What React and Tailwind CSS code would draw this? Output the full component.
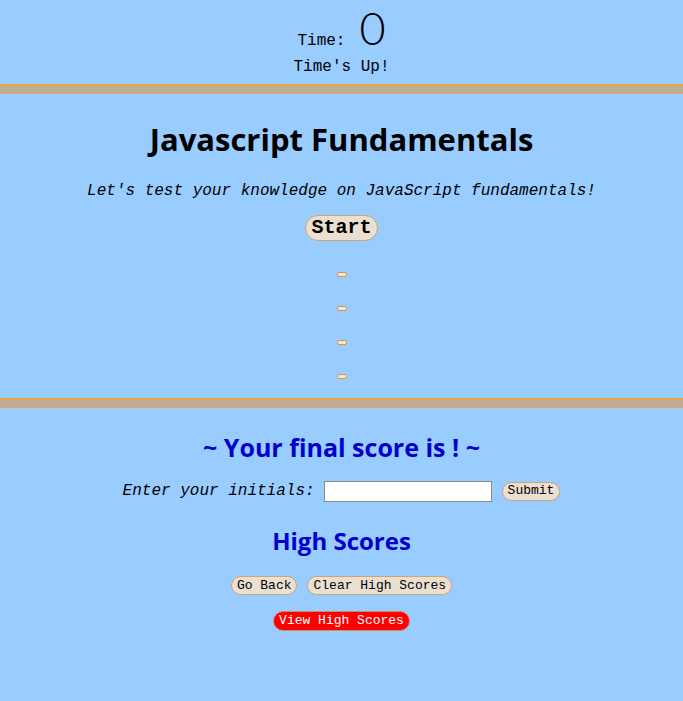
import React, { useState } from "react";

const mono = "font-['Liberation_Mono','Courier_New',monospace]";
const comic = "font-['Comic_Sans_MS','Open_Sans',sans-serif]";

function Bar() {
   return <div className="h-[11px] bg-[#bfac93] border-t-2 border-[#e3a54c] border-b border-b-[#b9c6d6]" />;
}

function Pill({ children, className = "" }) {
   return (
      <button
         className={`rounded-full border border-[#c9a57c] bg-[#ebdfd0] text-black ${mono} ${className}`}
      >
         {children}
      </button>
   );
}

export default function App() {
   const [initials, setInitials] = useState("");

   return (
      <div className="min-h-[701px] bg-[#99ccff] text-black">
         {/* timer */}
         <div className="flex flex-col items-center pt-[4px] h-[84px]">
            <div className="flex items-baseline gap-[14px]">
               <span className={`${mono} text-[16px]`}>Time:</span>
               <span className="font-['Lato','Liberation_Sans',sans-serif] text-[45px] leading-[49px] font-light">0</span>
            </div>
            <p className={`${mono} text-[16px] mt-[2px]`}>Time's Up!</p>
         </div>
         <Bar />

         {/* quiz */}
         <div className="flex flex-col items-center h-[303px]">
            <h1 className={`${comic} font-bold text-[31px] mt-[24px] leading-[40px]`}>Javascript Fundamentals</h1>
            <p className={`${mono} italic text-[16px] mt-[20px]`}>
               Let's test your knowledge on JavaScript fundamentals!
            </p>
            <Pill className="mt-[12px] px-[5px] h-[26px] text-[20px] font-bold leading-[22px]">Start</Pill>
            <div className="flex flex-col items-center gap-[29px] mt-[31px]">
               {[0, 1, 2, 3].map((i) => (
                  <button
                     key={i}
                     className="w-[10px] h-[5px] rounded-[2px] border border-[#d99a3c] bg-[#efe6d9]"
                  />
               ))}
            </div>
         </div>
         <Bar />

         {/* results */}
         <div className="flex flex-col items-center">
            <h2 className={`${comic} font-bold text-[25px] text-[#0000cc] mt-[21px] leading-[34px]`}>
               ~ Your final score is ! ~
            </h2>
            <div className="flex items-center mt-[15px]">
               <label className={`${mono} italic text-[16px]`}>Enter your initials:</label>
               <input
                  value={initials}
                  onChange={(e) => setInitials(e.target.value)}
                  className="ml-[9px] w-[168px] h-[21px] bg-white border border-[#8a8a8a] px-1 text-[13px]"
               />
               <Pill className="ml-[10px] h-[19px] px-[5px] text-[13px] leading-[16px]">Submit</Pill>
            </div>
            <h2 className={`${comic} font-bold text-[24px] text-[#0000cc] mt-[21px] leading-[34px]`}>High Scores</h2>
            <div className="flex gap-[10px] mt-[18px]">
               <Pill className="h-[19px] px-[5px] text-[13px] leading-[16px]">Go Back</Pill>
               <Pill className="h-[19px] px-[5px] text-[13px] leading-[16px]">Clear High Scores</Pill>
            </div>
            <button
               className={`${mono} mt-[16px] h-[20px] px-[5px] rounded-full bg-[#ff0000] border border-[#d08a70] text-white text-[13px] leading-[16px]`}
            >
               View High Scores
            </button>
         </div>
      </div>
   );
}
